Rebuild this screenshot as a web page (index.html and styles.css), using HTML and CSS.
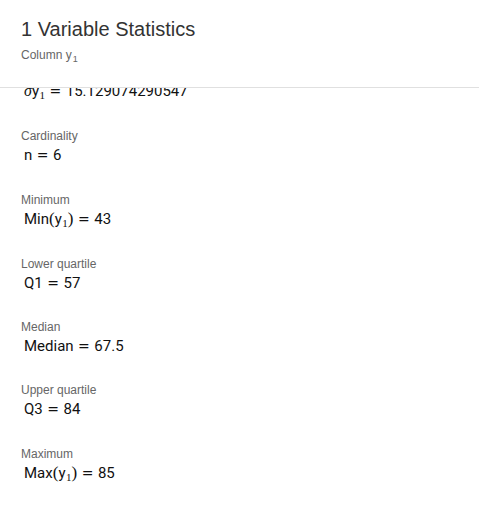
FILE: index.html
```html
<!DOCTYPE html>
<html>
<head>
<meta charset="utf-8">
<link rel="stylesheet" href="styles.css">
</head>
<body>
<div class="panel">
  <header class="head">
    <div class="title">1 Variable Statistics</div>
    <div class="subtitle">Column y<span class="sub">1</span></div>
  </header>
  <div class="scroller">
    <div class="list">
      <div class="item">
        <div class="label">Standard deviation</div>
        <div class="value"><span class="mi">σ</span>y<span class="msub">1</span><span class="rel">=</span>15.129074290547</div>
      </div>
      <div class="item">
        <div class="label">Cardinality</div>
        <div class="value">n<span class="rel">=</span>6</div>
      </div>
      <div class="item">
        <div class="label">Minimum</div>
        <div class="value">Min<span class="paren">(</span>y<span class="msub">1</span><span class="paren">)</span><span class="rel">=</span>43</div>
      </div>
      <div class="item">
        <div class="label">Lower quartile</div>
        <div class="value">Q1<span class="rel">=</span>57</div>
      </div>
      <div class="item">
        <div class="label">Median</div>
        <div class="value">Median<span class="rel">=</span>67.5</div>
      </div>
      <div class="item">
        <div class="label">Upper quartile</div>
        <div class="value">Q3<span class="rel">=</span>84</div>
      </div>
      <div class="item">
        <div class="label">Maximum</div>
        <div class="value">Max<span class="paren">(</span>y<span class="msub">1</span><span class="paren">)</span><span class="rel">=</span>85</div>
      </div>
    </div>
  </div>
</div>
</body>
</html>
```

FILE: styles.css
```css
html, body {
  margin: 0;
  padding: 0;
  background: #ffffff;
}

.panel {
  width: 479px;
  height: 511px;
  display: flex;
  flex-direction: column;
  overflow: hidden;
  font-family: "Liberation Sans", Arial, sans-serif;
}

.head {
  padding: 17px 21px 23px;
  border-bottom: 1px solid #e0e0e0;
}

.title {
  font-size: 20px;
  line-height: 24px;
  color: #333333;
}

.subtitle {
  margin-top: 6px;
  font-size: 12px;
  line-height: 16px;
  color: #666666;
}

.sub {
  font-size: 9px;
  position: relative;
  top: 3px;
  margin-left: 1px;
}

.scroller {
  flex: 1;
  overflow: hidden;
}

.list {
  margin-top: -24px;
  display: flex;
  flex-direction: column;
}

.item {
  padding: 0 21px 26.3px;
}

.label {
  font-size: 12px;
  line-height: 16px;
  color: #666666;
}

.value {
  margin-top: 1px;
  padding-left: 3px;
  font-family: Roboto, "Liberation Sans", sans-serif;
  font-size: 15px;
  line-height: 20px;
  color: #111111;
  white-space: nowrap;
}

.mi {
  font-family: "Liberation Serif", serif;
  font-style: italic;
  font-size: 16px;
}

.msub {
  font-family: "Liberation Serif", serif;
  font-size: 11px;
  position: relative;
  top: 3px;
  margin-left: 0.5px;
}

.paren {
  font-family: "Liberation Serif", serif;
  font-size: 17px;
}

.rel {
  font-family: "DejaVu Serif", serif;
  font-size: 14px;
  margin: 0 4.5px;
}
```
